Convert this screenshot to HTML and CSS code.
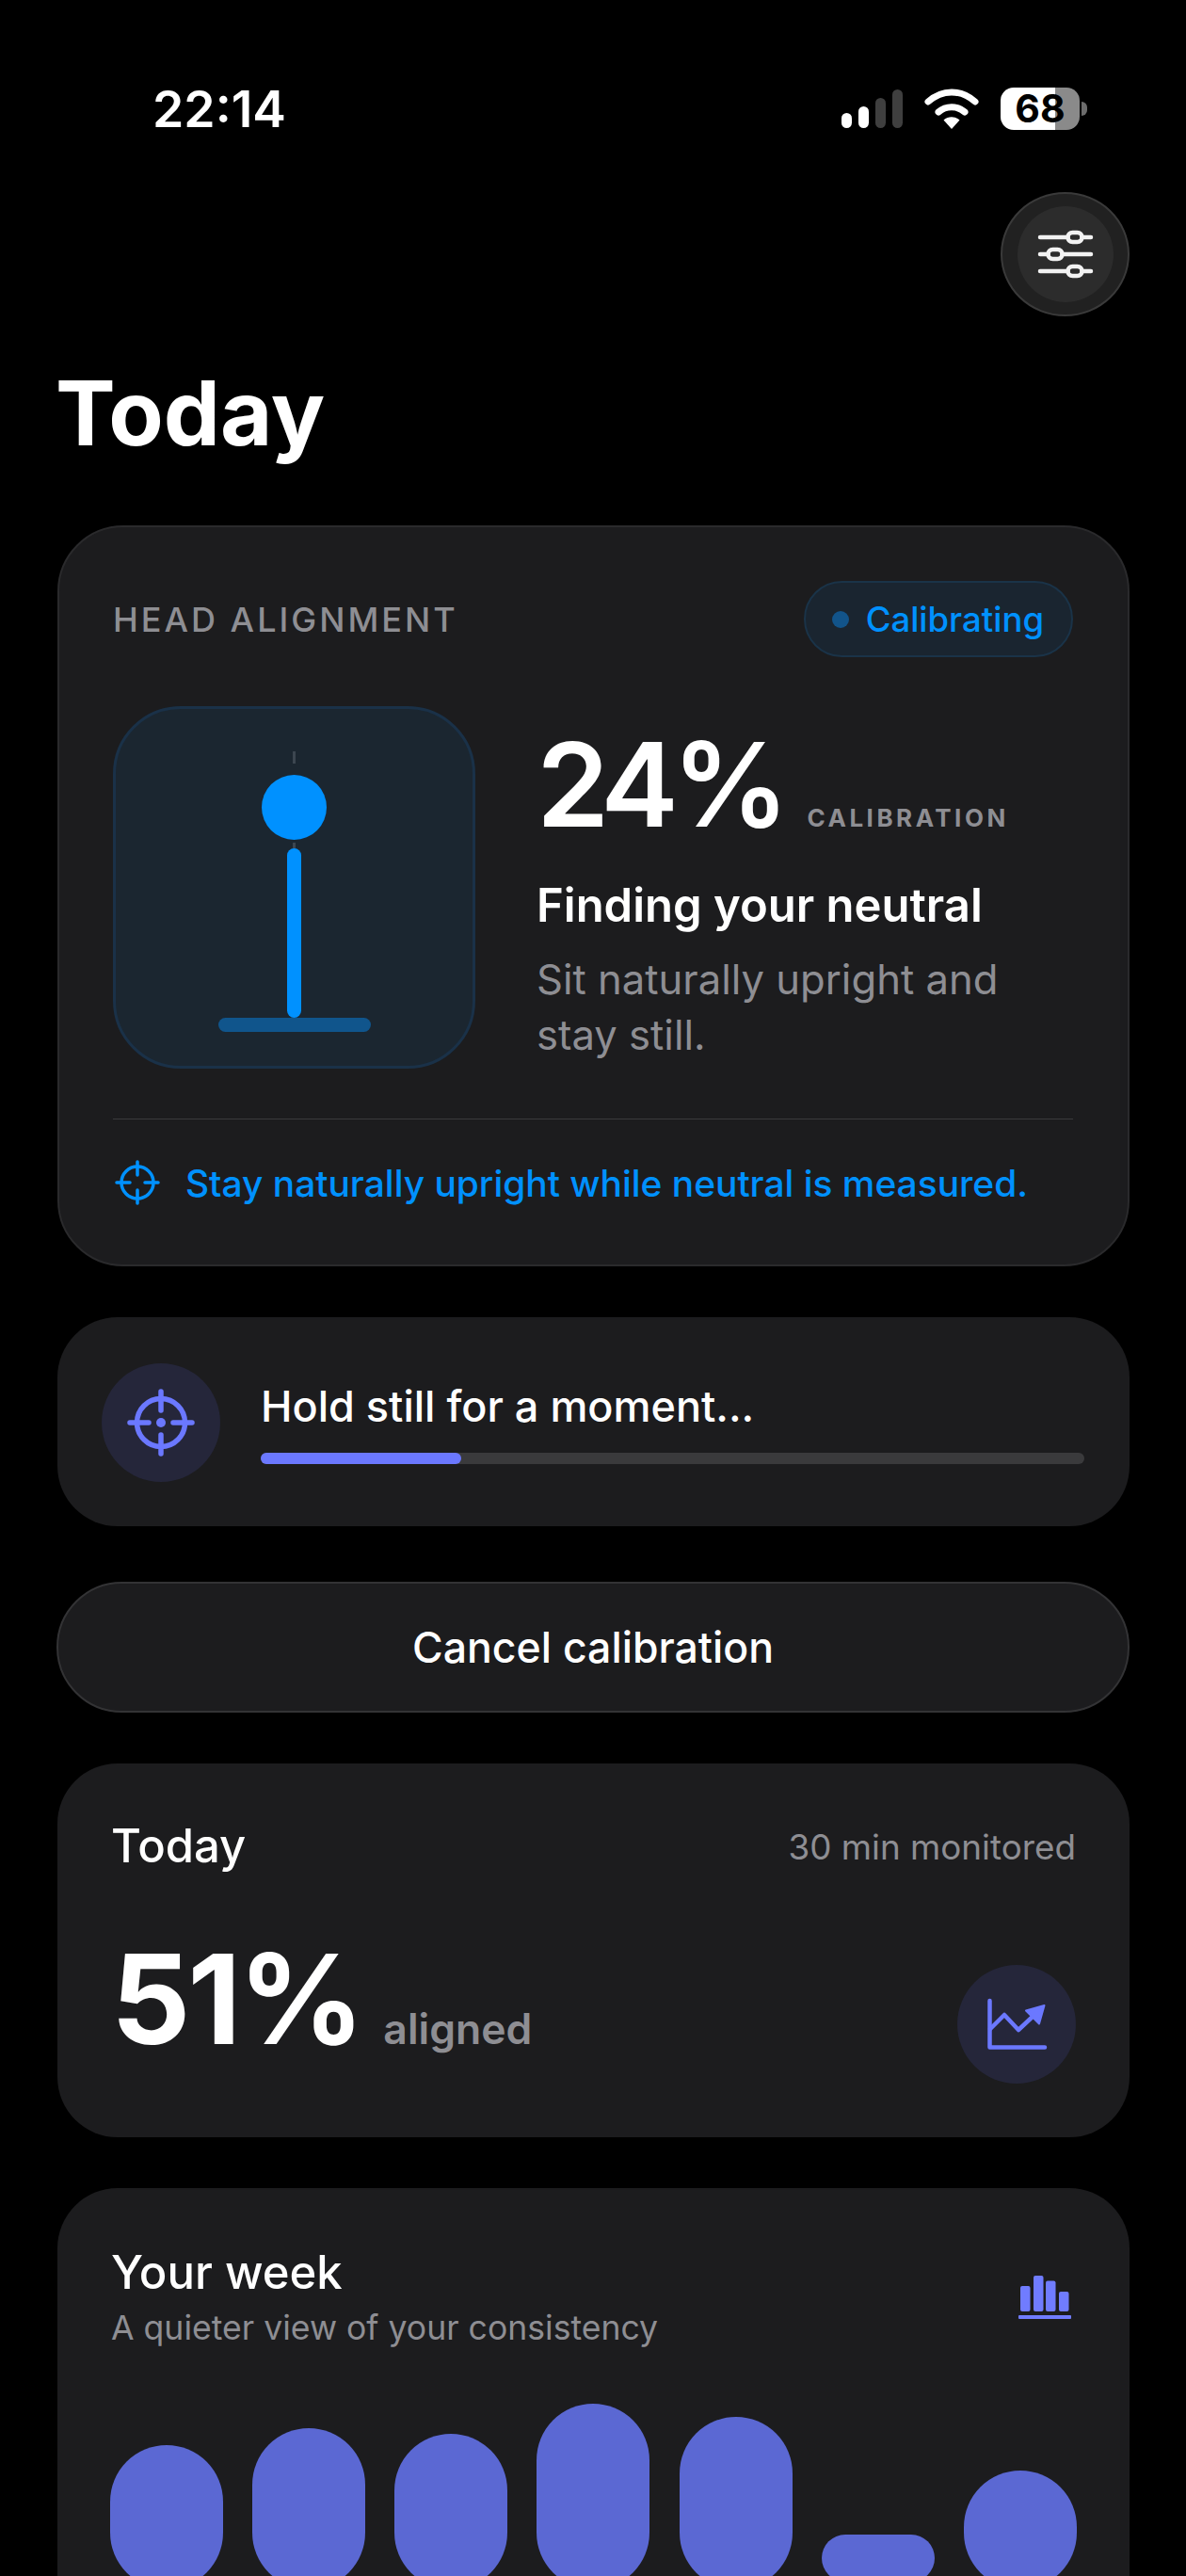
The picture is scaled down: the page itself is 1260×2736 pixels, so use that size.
FILE: index.html
```html
<!DOCTYPE html>
<html lang="en">
<head>
  <meta charset="UTF-8" />
  <title>Today</title>
  <link rel="stylesheet" href="styles.css">
</head>
<body>
  <div class="screen">
    <div class="status-bar">
      <span class="clock">22:14</span>
      <div class="status-icons">
        <svg width="65" height="41" viewBox="0 0 65 41">
          <rect x="0" y="25" width="11" height="16" rx="5.500" fill="#fff"/>
          <rect x="18" y="18" width="11" height="23" rx="5.500" fill="#fff"/>
          <rect x="36" y="9" width="11" height="32" rx="5.500" fill="#3f3f3f"/>
          <rect x="54" y="0" width="11" height="41" rx="5.500" fill="#3f3f3f"/>
        </svg>
        <svg width="58" height="43" viewBox="0 0 58 43" fill="none" stroke="#fff" stroke-linecap="round">
          <path d="M4 14C19 0.500 39 0.500 54 14" stroke-width="7"/>
          <path d="M15 25C23 18 35 18 43 25" stroke-width="7"/>
          <path d="M20.500 33.500L29 43L37.500 33.500C32.500 29.300 25.500 29.300 20.500 33.500Z" fill="#fff" stroke="none"/>
        </svg>
        <div class="battery">
          <div class="battery-body"><span class="battery-level">68</span></div>
          <div class="battery-cap"></div>
        </div>
      </div>
    </div>

    <div class="top-row">
      <button class="settings-btn">
        <span class="settings-inner">
          <svg width="60" height="52" viewBox="0 0 60 52" fill="none" stroke="#f2f2f2" stroke-linecap="round" stroke-width="4.500">
            <path d="M3 8H32.500M47.500 8H57"/>
            <rect x="32.500" y="3" width="15" height="10" rx="5"/>
            <path d="M3 26H11.500M26.500 26H57"/>
            <rect x="11.500" y="21" width="15" height="10" rx="5"/>
            <path d="M3 44H32.500M47.500 44H57"/>
            <rect x="32.500" y="39" width="15" height="10" rx="5"/>
          </svg>
        </span>
      </button>
    </div>

    <h1 class="page-title">Today</h1>

    <section class="card head-card">
      <div class="head-top">
        <span class="eyebrow">HEAD ALIGNMENT</span>
        <span class="pill"><i class="pill-dot"></i>Calibrating</span>
      </div>
      <div class="head-main">
        <div class="figure">
          <i class="tick"></i>
          <i class="fig-head"></i>
          <i class="tick tick-low"></i>
          <i class="fig-body"></i>
          <i class="fig-base"></i>
        </div>
        <div class="readout">
          <div class="readout-top">
            <span class="big-percent">24%</span>
            <span class="readout-label">CALIBRATION</span>
          </div>
          <div class="readout-title">Finding your neutral</div>
          <p class="readout-text">Sit naturally upright and<br>stay still.</p>
        </div>
      </div>
      <div class="hint">
        <svg width="48" height="48" viewBox="0 0 48 48" fill="none" stroke="#0091ff" stroke-width="3.500" stroke-linecap="round">
          <circle cx="24" cy="24" r="17"/>
          <path d="M24 2V16M24 32V46M2 24H16M32 24H46"/>
        </svg>
        <span>Stay naturally upright while neutral is measured.</span>
      </div>
    </section>

    <section class="card hold-card">
      <div class="icon-circle">
        <svg width="72" height="72" viewBox="0 0 72 72" fill="none" stroke="#6b78ff" stroke-width="5.500" stroke-linecap="round">
          <circle cx="36" cy="36" r="25.500"/>
          <path d="M36 3V23M36 49V69M3 36H23M49 36H69"/>
          <circle cx="36" cy="36" r="5" fill="#6b78ff" stroke="none"/>
        </svg>
      </div>
      <div class="hold-body">
        <div class="hold-title">Hold still for a moment...</div>
        <div class="track"><div class="track-fill" style="width: 24.3%"></div></div>
      </div>
    </section>

    <button class="cancel-btn">Cancel calibration</button>

    <section class="card today-card">
      <div class="today-top">
        <span class="card-title">Today</span>
        <span class="monitored">30 min monitored</span>
      </div>
      <div class="today-bottom">
        <div class="today-score">
          <span class="score">51%</span>
          <span class="score-label">aligned</span>
        </div>
        <div class="icon-circle">
          <svg width="66" height="58" viewBox="0 0 66 58" fill="none" stroke="#6b78ff" stroke-width="4.500" stroke-linecap="round" stroke-linejoin="round">
            <path d="M4.500 4V53.500H63"/>
            <path d="M5 34L20 19L35 35L51 20"/>
            <path d="M43 14.500L62.500 9L57 28.500Z" fill="#6b78ff" stroke-width="2"/>
          </svg>
        </div>
      </div>
    </section>

    <section class="card week-card">
      <div class="week-top">
        <div>
          <div class="card-title">Your week</div>
          <div class="week-sub">A quieter view of your consistency</div>
        </div>
        <svg class="week-icon" width="56" height="46" viewBox="0 0 56 46" fill="#707cff">
          <rect x="2" y="11" width="10.500" height="27" rx="2"/>
          <rect x="16" y="0" width="10.500" height="38" rx="2"/>
          <rect x="29" y="5.500" width="10.500" height="32.500" rx="2"/>
          <rect x="43" y="17" width="10.500" height="21" rx="2"/>
          <rect x="0" y="42" width="56" height="4" rx="1"/>
        </svg>
      </div>
      <div class="bars">
        <div class="bar" style="height: 153px"></div>
        <div class="bar" style="height: 171px"></div>
        <div class="bar" style="height: 165px"></div>
        <div class="bar" style="height: 197px"></div>
        <div class="bar" style="height: 183px"></div>
        <div class="bar bar-short" style="height: 50px"></div>
        <div class="bar" style="height: 126px"></div>
      </div>
    </section>
  </div>
</body>
</html>
```

FILE: styles.css
```css
* {
  box-sizing: border-box;
}
body {
  margin: 0;
  background: #000;
  color: #fff;
  font-family: Inter, "Noto Sans", sans-serif;
}
.screen {
  height: 2736px;
  overflow: hidden;
  padding: 0 60px;
}
.status-bar {
  display: flex;
  justify-content: space-between;
  align-items: center;
  height: 70px;
  margin-top: 80px;
  padding: 0 45px 0 102px;
}
.clock {
  font-size: 53.500px;
  font-weight: 600;
}
.status-icons {
  display: flex;
  align-items: center;
  gap: 23px;
}
.battery {
  display: flex;
  align-items: center;
  gap: 2px;
}
.battery-body {
  width: 84px;
  height: 45px;
  border-radius: 14px;
  background: linear-gradient(90deg, #fff 69%, #8a8a8a 69%);
  text-align: center;
}
.battery-level {
  color: #000;
  font-size: 41px;
  font-weight: 700;
  line-height: 45px;
}
.battery-cap {
  width: 6px;
  height: 15px;
  border-radius: 0 6px 6px 0;
  background: #6c6c6c;
}
.top-row {
  display: flex;
  justify-content: flex-end;
  margin-top: 54px;
}
.settings-btn {
  display: flex;
  align-items: center;
  justify-content: center;
  width: 137px;
  height: 132px;
  padding: 0;
  background: #212121;
  border: 2px solid #3a3a3a;
  border-radius: 50%;
}
.settings-inner {
  display: flex;
  align-items: center;
  justify-content: center;
  width: 102px;
  height: 102px;
  background: #2c2c2c;
  border-radius: 50%;
}
.page-title {
  margin: 44px 0 0 -1px;
  font-size: 95.500px;
  font-weight: 700;
  line-height: 116px;
}
.card {
  background: #1c1c1e;
  border-radius: 64px;
}
.head-card {
  height: 787px;
  margin: 62px 0 0 1px;
  padding: 57px 58px 0 57px;
  border: 2px solid #2a2a2c;
  border-radius: 70px;
}
.head-top {
  display: flex;
  justify-content: space-between;
  align-items: center;
}
.eyebrow {
  color: #8e8e93;
  font-size: 36px;
  font-weight: 500;
  letter-spacing: 3px;
}
.pill {
  display: flex;
  align-items: center;
  gap: 18px;
  height: 81px;
  padding: 0 29px 0 28px;
  background: #1a2530;
  border: 2px solid #1a3348;
  border-radius: 41px;
  color: #0091ff;
  font-size: 36.500px;
  font-weight: 500;
}
.pill-dot {
  width: 18px;
  height: 18px;
  background: #12548a;
  border-radius: 50%;
}
.head-main {
  display: flex;
  gap: 65px;
  margin-top: 52px;
}
.figure {
  flex: none;
  display: flex;
  flex-direction: column;
  align-items: center;
  width: 385px;
  height: 385px;
  padding-top: 45px;
  background: #1b2630;
  border: 3px solid #1a3148;
  border-radius: 72px;
}
.figure i {
  display: block;
  flex: none;
}
.tick {
  width: 3px;
  height: 13px;
  background: #3c4650;
}
.tick-low {
  height: 6px;
  margin-top: 3px;
}
.fig-head {
  width: 69px;
  height: 69px;
  margin-top: 12px;
  background: #0091ff;
  border-radius: 50%;
}
.fig-body {
  width: 15px;
  height: 180px;
  background: #0091ff;
  border-radius: 8px;
}
.fig-base {
  width: 162px;
  height: 15px;
  background: #10558c;
  border-radius: 8px;
}
.readout {
  flex: 1;
  padding-top: 21px;
}
.readout-top {
  display: flex;
  align-items: baseline;
  gap: 26px;
}
.big-percent {
  font-size: 124px;
  font-weight: 600;
  line-height: 124px;
  letter-spacing: -7px;
}
.readout-label {
  color: #8e8e93;
  font-size: 26px;
  font-weight: 700;
  letter-spacing: 3.500px;
}
.readout-title {
  margin-top: 37px;
  font-size: 49px;
  font-weight: 600;
  line-height: 60px;
}
.readout-text {
  margin: 19px 0 0;
  color: #8e8e93;
  font-size: 43.600px;
  line-height: 59px;
}
.hint {
  display: flex;
  align-items: center;
  gap: 27px;
  margin-top: 53px;
  padding-top: 43px;
  border-top: 1px solid #3a3a3c;
  color: #0091ff;
  font-size: 38.900px;
  font-weight: 500;
}
.hint svg {
  flex: none;
  margin-left: 2px;
}
.hold-card {
  display: flex;
  align-items: center;
  gap: 43px;
  height: 222px;
  margin: 54px 0 0 1px;
  padding: 2px 48px 0 47px;
}
.icon-circle {
  display: flex;
  align-items: center;
  justify-content: center;
  flex: none;
  width: 126px;
  height: 126px;
  background: #25263a;
  border-radius: 50%;
}
.hold-body {
  flex: 1;
}
.hold-title {
  font-size: 45px;
  font-weight: 500;
  line-height: 54px;
}
.track {
  height: 12px;
  margin-top: 22px;
  background: #3a3a3c;
  border-radius: 6px;
}
.track-fill {
  height: 100%;
  background: #6b78ff;
  border-radius: 6px;
}
.cancel-btn {
  display: block;
  width: 100%;
  height: 139px;
  margin-top: 59px;
  background: #1c1c1e;
  border: 2px solid #333335;
  border-radius: 70px;
  color: #fff;
  font-family: inherit;
  font-size: 44.600px;
  font-weight: 500;
}
.today-card {
  display: flex;
  flex-direction: column;
  justify-content: space-between;
  height: 397px;
  margin: 54px 0 0 1px;
  padding: 58px 57px 57px;
}
.today-top {
  display: flex;
  justify-content: space-between;
  align-items: center;
}
.card-title {
  font-size: 49px;
  font-weight: 500;
  line-height: 60px;
}
.monitored {
  color: #8e8e93;
  font-size: 36.800px;
}
.today-bottom {
  display: flex;
  justify-content: space-between;
  align-items: flex-end;
}
.today-score {
  display: flex;
  align-items: baseline;
  gap: 23px;
  margin-bottom: 25px;
}
.score {
  font-size: 132px;
  font-weight: 700;
  line-height: 130px;
  letter-spacing: -3px;
}
.score-label {
  color: #8e8e93;
  font-size: 44.500px;
  font-weight: 600;
}
.week-card {
  height: 600px;
  margin: 54px 0 0 1px;
  padding: 60px 57px 0;
}
.week-top {
  display: flex;
  justify-content: space-between;
  align-items: center;
}
.week-sub {
  margin-top: 7px;
  color: #8e8e93;
  font-size: 35.600px;
  line-height: 44px;
}
.week-icon {
  margin-right: 5px;
}
.bars {
  display: flex;
  align-items: flex-end;
  justify-content: space-between;
  height: 210px;
  margin: 45px -1px 0;
}
.bar {
  width: 120px;
  background: #5b68d3;
  border-radius: 60px;
}
.bar-short {
  margin-bottom: 8px;
  border-radius: 25px;
}
```
